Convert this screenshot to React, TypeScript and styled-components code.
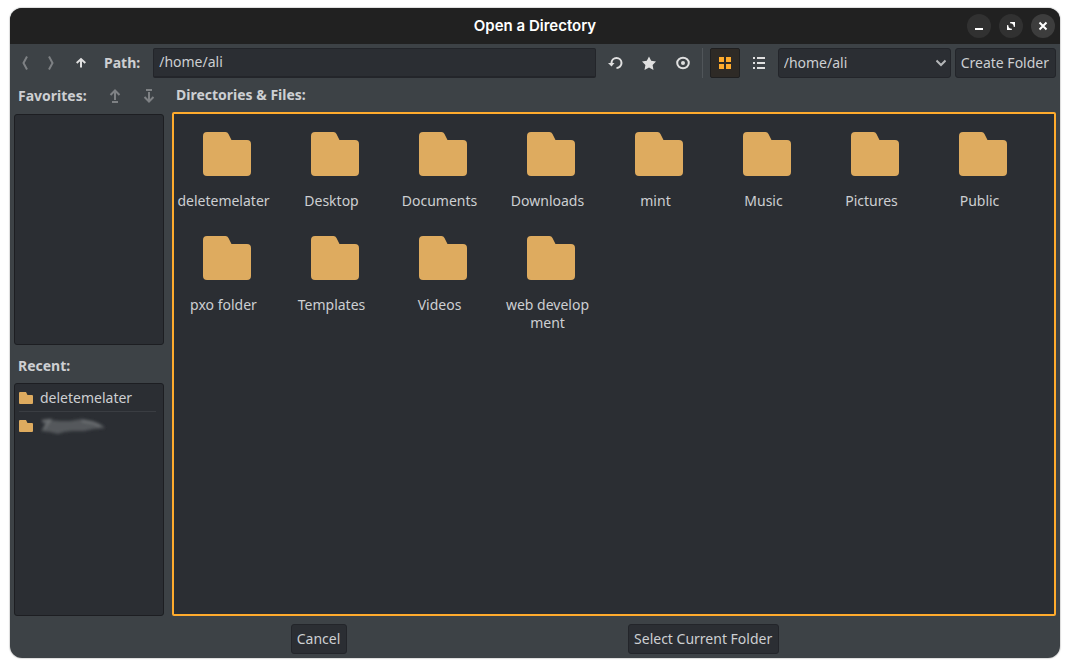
import React from 'react';
import styled, { createGlobalStyle } from 'styled-components';

const color = {
  title: '#212121',
  surface: '#3d4246',
  panel: '#2b2e33',
  edge: '#1d1e22',
  edgeSoft: '#23252a',
  text: '#cdcfd2',
  icon: '#e0e0e0',
  muted: '#7e8184',
  accent: '#ffab2d',
  folder: '#deab5f',
};

const GlobalStyle = createGlobalStyle`
  *, *::before, *::after { box-sizing: border-box; }
  body { margin: 0; background: #fff; }
  body, button, input, select {
    font-family: "Noto Sans", "Liberation Sans", sans-serif;
    font-size: 14px;
    line-height: 18px;
    color: ${color.text};
  }
`;

const Page = styled.div`
  display: flex;
  min-height: 100vh;
  padding: 8px 10px 10px;
`;

const Window = styled.main`
  flex: 1;
  min-width: 0;
  display: flex;
  flex-direction: column;
  overflow: hidden;
  border-radius: 12px;
  background: ${color.surface};
  box-shadow: 0 0 1px 1px rgba(0, 0, 0, 0.14);
`;

const TitleBar = styled.header`
  display: grid;
  grid-template-columns: 1fr auto 1fr;
  align-items: center;
  height: 36px;
  padding: 0 5px;
  background: ${color.title};
`;

const Title = styled.h1`
  grid-column: 2;
  margin: 0;
  font: 600 15px/20px Inter, sans-serif;
  color: #fff;
`;

const WindowControls = styled.div`
  display: flex;
  justify-content: flex-end;
  gap: 8px;
`;

const RoundButton = styled.button<{ $bright?: boolean }>`
  display: grid;
  place-items: center;
  width: 24px;
  height: 24px;
  padding: 0;
  border: 0;
  border-radius: 50%;
  background: ${(p) => (p.$bright ? '#3d3d3d' : '#313131')};
`;

const Toolbar = styled.div`
  display: flex;
  gap: 4px;
  padding: 4px 4px 0;
`;

const ToolButton = styled.button<{ $narrow?: boolean; $active?: boolean }>`
  display: grid;
  place-items: center;
  flex: none;
  width: ${(p) => (p.$narrow ? 22 : 30)}px;
  height: 30px;
  padding: 0;
  border: 1px solid ${(p) => (p.$active ? '#1f1f20' : 'transparent')};
  border-radius: 2px;
  background: ${(p) => (p.$active ? '#2e2a26' : 'transparent')};
`;

const PathLabel = styled.label`
  padding: 0 9px 0 4px;
  font-weight: 700;
  line-height: 30px;
`;

const PathInput = styled.input`
  flex: 1;
  min-width: 80px;
  height: 30px;
  padding: 0 5px 2px;
  border: 1px solid ${color.edgeSoft};
  border-bottom-width: 2px;
  border-radius: 2px;
  outline: 0;
  background: ${color.panel};
`;

const Divider = styled.div`
  width: 4px;
  height: 30px;
  border-left: 1px solid #505559;
`;

const SelectBox = styled.div`
  position: relative;
  flex: none;
  width: 173px;
  height: 30px;

  svg {
    position: absolute;
    right: 5px;
    top: 10px;
    pointer-events: none;
  }
`;

const DriveSelect = styled.select`
  appearance: none;
  width: 100%;
  height: 30px;
  padding: 0 24px 0 5px;
  border: 1px solid ${color.edgeSoft};
  border-radius: 3px;
  background: ${color.panel};
`;

const PushButton = styled.button`
  flex: none;
  height: 30px;
  padding: 0 5px;
  border: 1px solid ${color.edgeSoft};
  border-radius: 3px;
  background: ${color.panel};
  white-space: nowrap;
`;

const Body = styled.div`
  flex: 1;
  display: flex;
  gap: 8px;
  padding: 0 4px;
`;

const Sidebar = styled.aside`
  flex: none;
  display: flex;
  flex-direction: column;
  width: 150px;
`;

const Browser = styled.section`
  flex: 1;
  min-width: 0;
  display: flex;
  flex-direction: column;
`;

const Heading = styled.h2`
  margin: 0;
  padding: 0 4px;
  font-size: 14px;
  font-weight: 700;
  line-height: 34px;
`;

const SideHeader = styled.div`
  display: flex;
  align-items: center;
  gap: 4px;
  height: 36px;
`;

const FavoritesHeading = styled(Heading)`
  margin-right: auto;
`;

const RecentHeading = styled(Heading)`
  height: 38px;
  padding-top: 2px;
  line-height: 38px;
`;

const SideList = styled.ul<{ $basis: number }>`
  flex: 1 1 ${(p) => p.$basis}px;
  margin: 0;
  padding: 0 7px 0 4px;
  list-style: none;
  border: 1px solid ${color.edge};
  border-radius: 3px;
  background: ${color.panel};
`;

const RecentItem = styled.li`
  display: flex;
  align-items: center;
  gap: 7px;
  height: 28px;
  border-bottom: 1px solid #3a3d42;

  &:last-child {
    border-bottom: 0;
  }
`;

const FileGrid = styled.ul`
  flex: 1;
  display: grid;
  grid-template-columns: repeat(auto-fill, 98px);
  align-content: start;
  gap: 26px 10px;
  margin: 0;
  padding: 18px 0;
  list-style: none;
  border: 2px solid ${color.accent};
  border-radius: 2px;
  background: ${color.panel};
`;

const FileItem = styled.li`
  display: flex;
  flex-direction: column;
  gap: 16px;
  padding: 0 1px 0 2px;
  text-align: center;
  word-break: break-all;

  svg {
    margin-left: 27px;
  }
`;

const Footer = styled.footer`
  display: flex;
  justify-content: space-evenly;
  gap: 4px;
  padding: 8px 4px 4px;
`;

const FooterButton = styled(PushButton)`
  padding: 0 6px 0 5px;
`;

function FolderLarge() {
  return (
    <svg width="48" height="44" viewBox="0 0 48 44" aria-hidden="true">
      <path
        fill={color.folder}
        d="M4 0H22.500Q24.500 0 25.500 2L28.500 8H44Q48 8 48 12V40Q48 44 44 44H4Q0 44 0 40V4Q0 0 4 0Z"
      />
    </svg>
  );
}

function FolderSmall() {
  return (
    <svg width="14" height="12" viewBox="0 0 14 12" aria-hidden="true">
      <path fill={color.folder} d="M1 0H7L8.500 3H13Q14 3 14 4V11Q14 12 13 12H1Q0 12 0 11V1Q0 0 1 0Z" />
    </svg>
  );
}

function Icon({ d, stroke = color.icon, width = 2 }: { d: string; stroke?: string; width?: number }) {
  return (
    <svg width="16" height="16" viewBox="0 0 16 16" fill="none" stroke={stroke} strokeWidth={width} aria-hidden="true">
      <path d={d} />
    </svg>
  );
}

function HiddenName() {
  return (
    <svg width="68" height="20" viewBox="0 0 68 20" role="img" aria-label="Hidden entry">
      <defs>
        <filter id="smear" x="-10%" y="-30%" width="120%" height="160%">
          <feGaussianBlur stdDeviation="1.500" />
        </filter>
      </defs>
      <g filter="url(#smear)">
        <path
          fill="#55585c"
          d="M2 4L10 4L20 5L30 5L42 3L52 5L62 9L65 12L54 13L44 15L32 15L24 16L18 18L10 16L1 15L5 9Z"
        />
        <path fill="none" stroke="#707376" strokeWidth="2" d="M2 5L10 4L4 13M42 5L54 7L60 10" />
      </g>
    </svg>
  );
}

const folders = [
  'deletemelater', 'Desktop', 'Documents', 'Downloads', 'mint', 'Music',
  'Pictures', 'Public', 'pxo folder', 'Templates', 'Videos', 'web development',
];

export default function App() {
  return (
    <Page>
      <GlobalStyle />
      <Window>
        <TitleBar>
          <Title>Open a Directory</Title>
          <WindowControls>
            <RoundButton aria-label="Minimize">
              <Icon stroke="#fff" d="M4 11H12" />
            </RoundButton>
            <RoundButton aria-label="Maximize">
              <svg width="16" height="16" viewBox="0 0 16 16" aria-hidden="true">
                <path fill="#fff" d="M7 4H12V9L10.500 8.500V7L9 5.500H7.500ZM4 7L5.500 7.500V9L7 10.500H8.500L9 12H4Z" />
                <path fill="#fff" d="M8.500 4H12V7.500ZM4 8.500V12H7.500Z" />
              </svg>
            </RoundButton>
            <RoundButton $bright aria-label="Close">
              <Icon stroke="#fff" d="M4.500 4.500L11.500 11.500M11.500 4.500L4.500 11.500" />
            </RoundButton>
          </WindowControls>
        </TitleBar>

        <Toolbar>
          <ToolButton $narrow aria-label="Back">
            <Icon stroke={color.muted} d="M10 1.500L6.500 8L10 14.500" />
          </ToolButton>
          <ToolButton $narrow aria-label="Forward">
            <Icon stroke={color.muted} d="M6 1.500L9.500 8L6 14.500" />
          </ToolButton>
          <ToolButton aria-label="Parent folder">
            <Icon d="M8 12.500V4.500M3.700 8L8 4L12.300 8" />
          </ToolButton>
          <PathLabel htmlFor="path">Path:</PathLabel>
          <PathInput id="path" defaultValue="/home/ali" />
          <ToolButton aria-label="Refresh">
            <svg width="16" height="16" viewBox="0 0 16 16" aria-hidden="true">
              <path fill="none" stroke={color.icon} strokeWidth="2" d="M4.500 9V8A5 5 0 1 1 9.500 13" />
              <path fill={color.icon} d="M1 8H7.500L4.500 11.500Z" />
            </svg>
          </ToolButton>
          <ToolButton aria-label="Favorite">
            <svg width="16" height="16" viewBox="0 0 16 16" aria-hidden="true">
              <path fill={color.icon} d="M8 1.500L10.200 5.800L15 6.500L11.600 9.900L12.500 15L8 12.600L3.500 15L4.400 9.900L1 6.500L5.800 5.800Z" />
            </svg>
          </ToolButton>
          <ToolButton aria-label="Show hidden files">
            <svg width="16" height="16" viewBox="0 0 16 16" aria-hidden="true">
              <ellipse cx="8" cy="8" rx="5.800" ry="5.200" fill="none" stroke={color.icon} strokeWidth="2" />
              <circle cx="8" cy="8" r="2" fill={color.icon} />
            </svg>
          </ToolButton>
          <Divider />
          <ToolButton $active aria-label="Grid view" aria-pressed="true">
            <svg width="16" height="16" viewBox="0 0 16 16" aria-hidden="true">
              <path fill={color.accent} d="M2 2H7V7H2ZM9 2H14V7H9ZM2 9H7V14H2ZM9 9H14V14H9Z" />
            </svg>
          </ToolButton>
          <ToolButton aria-label="List view">
            <svg width="16" height="16" viewBox="0 0 16 16" aria-hidden="true">
              <path fill={color.icon} d="M2 2H4V4H2ZM6 2H14V4H6ZM2 7H4V9H2ZM6 7H14V9H6ZM2 12H4V14H2ZM6 12H14V14H6Z" />
            </svg>
          </ToolButton>
          <SelectBox>
            <DriveSelect aria-label="Location">
              <option>/home/ali</option>
            </DriveSelect>
            <svg width="10" height="10" viewBox="0 0 10 10" aria-hidden="true">
              <path fill="none" stroke="#b4b6b8" strokeWidth="2" d="M0.500 2.500L5 7L9.500 2.500" />
            </svg>
          </SelectBox>
          <FooterButton>Create Folder</FooterButton>
        </Toolbar>

        <Body>
          <Sidebar>
            <SideHeader>
              <FavoritesHeading>Favorites:</FavoritesHeading>
              <ToolButton aria-label="Move favorite up">
                <Icon stroke={color.muted} d="M8 12V3M3.500 7L8 2.500L12.500 7M5 14H11" />
              </ToolButton>
              <ToolButton aria-label="Move favorite down">
                <Icon stroke={color.muted} d="M8 4V13M3.500 9L8 13.500L12.500 9M5 2H11" />
              </ToolButton>
            </SideHeader>
            <SideList $basis={231} aria-label="Favorites" />
            <RecentHeading>Recent:</RecentHeading>
            <SideList $basis={233} aria-label="Recent">
              <RecentItem><FolderSmall />deletemelater</RecentItem>
              <RecentItem><FolderSmall /><HiddenName /></RecentItem>
            </SideList>
          </Sidebar>
          <Browser>
            <Heading>Directories &amp; Files:</Heading>
            <FileGrid>
              {folders.map((name) => (
                <FileItem key={name}>
                  <FolderLarge />
                  {name}
                </FileItem>
              ))}
            </FileGrid>
          </Browser>
        </Body>

        <Footer>
          <FooterButton>Cancel</FooterButton>
          <FooterButton>Select Current Folder</FooterButton>
        </Footer>
      </Window>
    </Page>
  );
}
